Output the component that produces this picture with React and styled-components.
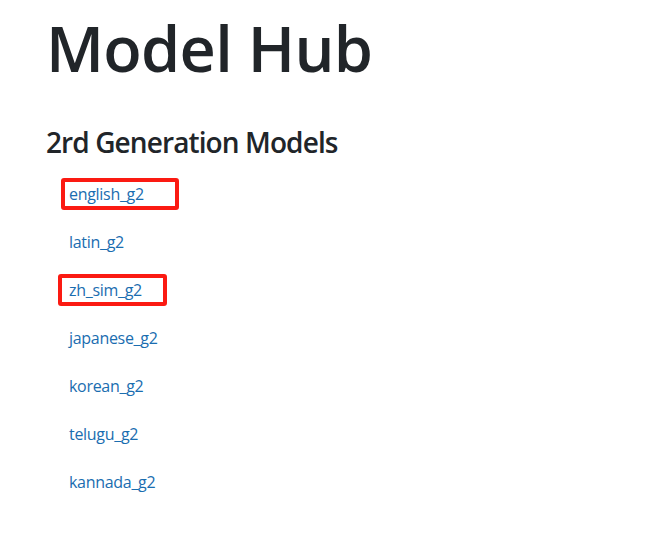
import React from "react";
import styled, { createGlobalStyle } from "styled-components";

const Global = createGlobalStyle`
  html, body { margin: 0; padding: 0; background: #ffffff; }
  body { font-family: "Open Sans", "Noto Sans", sans-serif; color: #212529; }
`;

const Page = styled.main`
  display: flex;
  flex-direction: column;
  padding: 10px 46px 0 46px;
`;

const Title = styled.h1`
  margin: 0;
  font-size: 63px;
  font-weight: 600;
  line-height: 1.2;
  letter-spacing: -0.7px;
  color: #212529;
`;

const Section = styled.section`
  display: flex;
  flex-direction: column;
  margin-top: 38px;
`;

const SectionTitle = styled.h2`
  margin: 0 0 10px 0;
  font-size: 28px;
  font-weight: 600;
  line-height: 36px;
  letter-spacing: -0.9px;
  color: #212529;
`;

const List = styled.ul`
  list-style: none;
  margin: 0;
  padding: 0;
  display: flex;
  flex-direction: column;
`;

const Item = styled.li`
  position: relative;
  display: flex;
  align-items: center;
  height: 48px;
  padding-left: 23px;
`;

const Link = styled.a`
  font-size: 16px;
  line-height: 24px;
  color: #1a6db0;
  text-decoration: none;
  letter-spacing: -0.3px;
`;

const Marker = styled.span`
  position: absolute;
  top: 50%;
  left: ${(p) => p.$left}px;
  width: ${(p) => p.$width}px;
  height: ${(p) => p.$height}px;
  transform: translateY(-50%);
  box-sizing: border-box;
  border: 4px solid #fb1a12;
  border-radius: 3px;
  pointer-events: none;
`;

const models = [
  { name: "english_g2", mark: { left: 15, width: 118, height: 32 } },
  { name: "latin_g2" },
  { name: "zh_sim_g2", mark: { left: 12, width: 109, height: 32 } },
  { name: "japanese_g2" },
  { name: "korean_g2" },
  { name: "telugu_g2" },
  { name: "kannada_g2" },
];

export default function App() {
  return (
    <>
      <Global />
      <Page>
        <Title>Model Hub</Title>
        <Section>
          <SectionTitle>2rd Generation Models</SectionTitle>
          <List>
            {models.map((m) => (
              <Item key={m.name}>
                <Link href="#">{m.name}</Link>
                {m.mark && (
                  <Marker
                    $left={m.mark.left}
                    $width={m.mark.width}
                    $height={m.mark.height}
                  />
                )}
              </Item>
            ))}
          </List>
        </Section>
      </Page>
    </>
  );
}
